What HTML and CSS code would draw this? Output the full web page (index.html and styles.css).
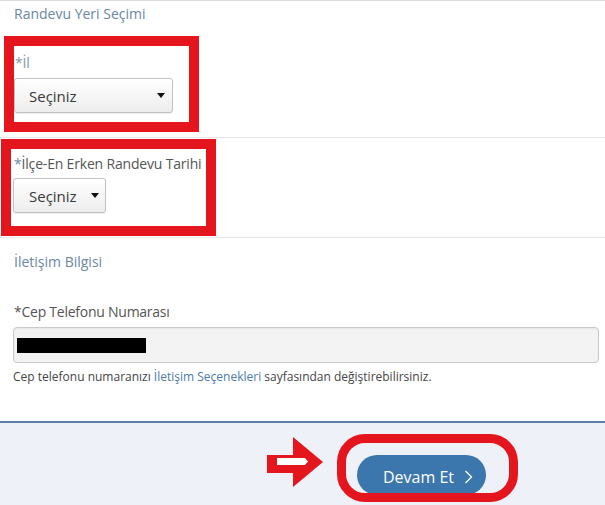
FILE: index.html
```html
<!DOCTYPE html>
<html lang="tr">
<head>
<meta charset="utf-8">
<title>Randevu Yeri Seçimi</title>
<link rel="stylesheet" href="styles.css">
</head>
<body>
<div class="page">
  <div class="topline"></div>
  <section class="place">
    <h2 class="sec-title place-title">Randevu Yeri Seçimi</h2>
    <div class="row row-first">
      <div class="mark mark-il">
        <label class="field-label">*İl</label>
        <div class="select select-il"><span class="select-text">Seçiniz</span><span class="caret"></span></div>
      </div>
    </div>
    <div class="row row-second">
      <div class="mark mark-ilce">
        <label class="field-label"><span class="ast">*</span>İlçe-En Erken Randevu Tarihi</label>
        <div class="select select-ilce"><span class="select-text">Seçiniz</span><span class="caret"></span></div>
      </div>
    </div>
  </section>
  <section class="contact">
    <h2 class="sec-title contact-title">İletişim Bilgisi</h2>
    <label class="field-label phone-label">*Cep Telefonu Numarası</label>
    <div class="input"><span class="redact"></span></div>
    <p class="help">Cep telefonu numaranızı <a class="link">İletişim Seçenekleri</a> sayfasından değiştirebilirsiniz.</p>
  </section>
  <footer class="actions">
    <svg class="arrow" width="56" height="50" viewBox="0 0 56 50">
      <polygon points="0,18 26,18 26,0 56,25 26,50 26,36 0,36" fill="#e5151d"/>
      <polygon points="10,21 38,21 41,24.5 38,28 10,28" fill="#ffffff"/>
    </svg>
    <div class="ring">
      <button class="btn">Devam Et<svg class="chev" width="9" height="14" viewBox="0 0 9 14"><polyline points="1.5,1 7.5,7 1.5,13" fill="none" stroke="#ffffff" stroke-width="1.3"/></svg></button>
    </div>
  </footer>
</div>
</body>
</html>
```

FILE: styles.css
```css
* { box-sizing: border-box; }
html, body { margin: 0; padding: 0; background: #ffffff; }
body {
  font-family: "Open Sans", "Noto Sans", sans-serif;
  color: #555555;
  width: 605px;
  height: 505px;
  overflow: hidden;
}
.page { display: flex; flex-direction: column; min-height: 505px; }
.topline { height: 1px; background: #dcdcdc; }

.sec-title {
  margin: 0;
  font-weight: 400;
  font-size: 14px;
  line-height: 19px;
  color: #6a87a3;
  padding-left: 14px;
  white-space: nowrap;
}
.place-title { padding-top: 3px; }

.row { border-bottom: 1px solid #e8e8e8; }
.row-first { padding-top: 13px; padding-bottom: 5px; }
.row-second { padding-top: 1px; padding-bottom: 1px; }

.mark {
  border: 10px solid #e5151d;
  display: flex;
  flex-direction: column;
  align-items: flex-start;
}
.mark-il { margin-left: 4px; width: 195px; padding: 7px 0 9px 0; gap: 6px; }
.mark-ilce { margin-left: 1px; width: 215px; padding: 5px 0 13px 2px; gap: 5px; }

.field-label {
  font-size: 14px;
  line-height: 19px;
  color: #555555;
  padding-left: 1px;
  white-space: nowrap;
  letter-spacing: -0.18px;
}
.mark-il .field-label { color: #8796a6; }
.ast { color: #6a87a3; }

.select {
  height: 35px;
  display: flex;
  align-items: center;
  justify-content: space-between;
  border: 1px solid #c2c2c2;
  border-radius: 3px;
  background: linear-gradient(#ffffff, #ededed);
  box-shadow: 0 1px 1px rgba(0,0,0,0.08);
  color: #3a3a3a;
  font-size: 15px;
}
.select-il { width: 159px; padding: 0 7px 0 14px; }
.select-ilce { width: 93px; padding: 0 6px 0 15px; }
.caret {
  width: 0; height: 0;
  border-left: 4.5px solid transparent;
  border-right: 4.5px solid transparent;
  border-top: 5px solid #111111;
}

.contact { display: flex; flex-direction: column; padding-bottom: 35px; border-bottom: 2px solid #5b80a6; }
.contact-title { margin-top: 14px; }
.phone-label { margin-top: 31px; padding-left: 14px; letter-spacing: -0.25px; }
.input {
  margin: 6px 6px 0 13px;
  height: 36px;
  border: 1px solid #c9c9c9;
  border-radius: 4px;
  background: #f3f3f3;
  box-shadow: inset 0 1px 2px rgba(0,0,0,0.06);
  padding: 10px 0 0 3px;
}
.redact { display: block; width: 129px; height: 15px; background: #000000; }
.help {
  margin: 5px 0 0 13px;
  font-size: 12px;
  line-height: 18px;
  color: #454545;
}
.link { color: #4a7bab; text-decoration: none; }

.actions {
  flex: 1;
  background: #eef2f8;
  display: flex;
  align-items: flex-start;
  padding: 11px 0 0 267px;
  gap: 14px;
}
.arrow { display: block; margin-top: 3px; }
.ring {
  width: 181px;
  height: 68px;
  border: 9px solid #e5151d;
  border-radius: 28px;
  padding: 12px 0 0 11px;
  overflow: hidden;
}
.btn {
  width: 129px;
  height: 40px;
  border: 0;
  border-radius: 20px;
  background: #3b76ad;
  color: #ffffff;
  font-family: "Open Sans", "Noto Sans", sans-serif;
  font-size: 16px;
  line-height: 22px;
  padding: 11px 0 6px 26px;
  display: flex;
  align-items: flex-start;
  gap: 10px;
}
.chev { display: block; margin-top: 4px; }
```
